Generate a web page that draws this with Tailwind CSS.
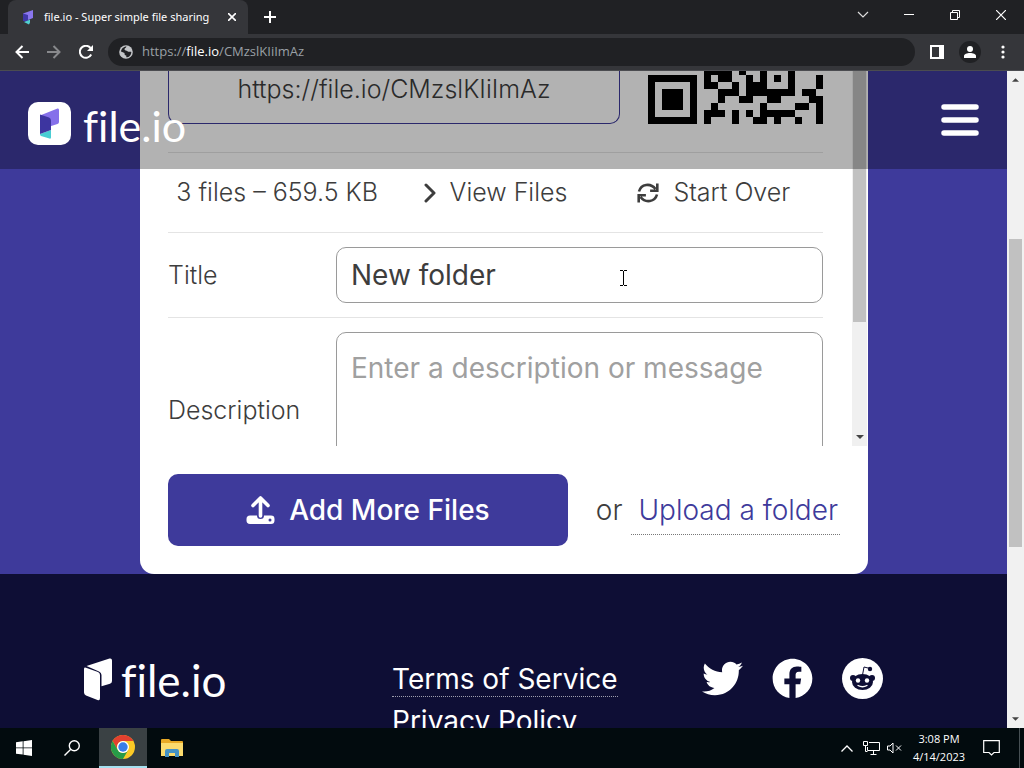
<!DOCTYPE html>
<html lang="en">
<head>
<meta charset="utf-8">
<meta name="viewport" content="width=device-width, initial-scale=1">
<title>file.io - Super simple file sharing</title>
<script src="https://cdn.jsdelivr.net/npm/@tailwindcss/browser@4"></script>
</head>
<body class="flex h-screen flex-col overflow-hidden bg-[#202124] font-['Inter',sans-serif] text-[#3d3d3d]">

<!-- Tab strip -->
<header class="flex h-[34px] shrink-0 items-stretch bg-[#202124] pl-2 font-['Open_Sans',sans-serif] text-white">
  <div class="flex w-60 items-center rounded-t-lg bg-[#35363a] pl-3 pr-2">
    <svg class="size-4" viewBox="0 0 16 16"><path d="M3 4.500 13 1v8l-5 2z" fill="#8a76ee"/><path d="M3 4.500l5 1.500v7l-5-1z" fill="#4038a8"/><path d="M4 13l4-1.500 2-1v3l-1 2z" fill="#52d1d2"/></svg>
    <span class="ml-2 flex-1 whitespace-nowrap font-['Noto_Sans',sans-serif] text-[11px]">file.io - Super simple file sharing</span>
    <button aria-label="Close tab" class="grid size-4 place-items-center"><svg class="size-2" viewBox="0 0 8 8" stroke="#fff" stroke-width="1.600"><path d="M0 0l8 8M8 0L0 8"/></svg></button>
  </div>
  <button aria-label="New tab" class="grid w-11 place-items-center"><svg class="size-3" viewBox="0 0 12 12" stroke="#fff" stroke-width="2"><path d="M6 0v12M0 6h12"/></svg></button>
  <div class="ml-auto flex pb-1">
    <button aria-label="Search tabs" class="grid w-[46px] place-items-center"><svg class="h-2 w-3" viewBox="0 0 12 8" fill="none" stroke="#ddd" stroke-width="1.200"><path d="M1 1l5 5 5-5"/></svg></button>
    <button aria-label="Minimize" class="grid w-[46px] place-items-center"><svg class="size-[10px]" viewBox="0 0 10 10" fill="#fff"><path d="M0 4h10v1H0z"/></svg></button>
    <button aria-label="Restore" class="grid w-[46px] place-items-center"><svg class="size-[10px]" viewBox="0 0 10 10" fill="none" stroke="#fff"><path d="M.5 2.500h7v7h-7zM2.500 2.500v-2h7v7h-2"/></svg></button>
    <button aria-label="Close" class="grid w-[46px] place-items-center"><svg class="size-[10px]" viewBox="0 0 10 10" stroke="#fff" stroke-width="1.200"><path d="M0 0l10 10M10 0L0 10"/></svg></button>
  </div>
</header>

<!-- Toolbar -->
<nav class="flex h-[37px] shrink-0 items-center border-b border-[#4b4c50] bg-[#35363a] pl-3 pr-[11px] font-['Open_Sans',sans-serif] text-white">
  <button aria-label="Back" class="grid size-5 place-items-center"><svg class="size-[14px]" viewBox="0 0 14 14" fill="none" stroke="#fff" stroke-width="2"><path d="M14 7H1.500M7.500 1l-6 6 6 6"/></svg></button>
  <button aria-label="Forward" class="ml-3 grid size-5 place-items-center"><svg class="size-[14px]" viewBox="0 0 14 14" fill="none" stroke="#88898c" stroke-width="2"><path d="M0 7h12.500M6.500 1l6 6-6 6"/></svg></button>
  <button aria-label="Reload" class="ml-3 grid size-5 place-items-center"><svg class="size-[14px]" viewBox="0 0 14 14"><path d="M12.200 9.500A6 6 0 1 1 11.500 3" fill="none" stroke="#fff" stroke-width="2"/><path d="M14 0v6H8z" fill="#fff"/></svg></button>
  <div class="ml-3 flex h-7 flex-1 items-center rounded-full bg-[#202124] px-[11px]">
    <svg class="size-[14px]" viewBox="0 0 14 14"><circle cx="7" cy="7" r="6.800" fill="#c3c5c8"/><path d="M7.500 1.500C7 3 5.500 3 5.500 4.500c0 1 2 .8 3 1.800s2.500.2 3.800.7c0 3-2 5.300-5 5.300V10.500C5.500 10.500 5.500 9 5.500 8L2 6.500C2.300 4 4.500 1.500 7.500 1.500z" fill="#202124"/></svg>
    <div role="textbox" aria-label="Address" class="ml-2 pl-px text-[13px] text-[#9aa0a6]">https://<span class="text-white">file.io</span>/CMzslKIiImAz</div>
  </div>
  <button aria-label="Side panel" class="ml-3 grid size-5 place-items-center"><svg class="size-[14px]" viewBox="0 0 14 14"><path d="M0 0h14v14H0zM2 2v10h7V2z" fill="#fff" fill-rule="evenodd"/></svg></button>
  <button aria-label="Profile" class="ml-3 grid size-[22px] place-items-center rounded-full bg-[#202124]"><svg class="size-3" viewBox="0 0 12 12" fill="#fff"><circle cx="6" cy="3" r="3"/><path d="M0 12V10c0-4 12-4 12 0v2z"/></svg></button>
  <button aria-label="Menu" class="ml-3 grid size-5 place-items-center"><svg class="h-[14px] w-1" viewBox="0 0 4 14" fill="#fff"><circle cx="2" cy="2" r="1.600"/><circle cx="2" cy="7" r="1.600"/><circle cx="2" cy="12" r="1.600"/></svg></button>
</nav>

<!-- Page viewport -->
<div class="relative flex min-h-0 flex-1">
  <div class="relative min-w-0 flex-1 overflow-hidden bg-[#0e0e35]">

    <!-- Site header laid over the scrolled page -->
    <div class="absolute inset-x-0 top-0 z-10 flex h-[98px] items-center justify-between bg-black/30 pr-7 pb-px pl-7 text-white">
      <a href="#" class="flex items-center pt-2">
        <svg class="size-[43px]" viewBox="0 0 43 43"><rect width="43" height="43" rx="10" fill="#fff"/><path d="M12 13.500 29.500 6.500Q31 6 31 8V20q0 1.500-1.500 2L20 25z" fill="#8570ea"/><path d="M12 32l11-4v7.500q0 1.500-1.500 1L13 34q-1-.5-1-2z" fill="#48cdd3"/><path d="M12 12.500l9 3q2 .8 2 3V28l-11 4z" fill="#3d35a0"/></svg>
        <span class="ml-3 pt-1 font-['Lato',sans-serif] text-[43px] leading-none [font-variant-ligatures:none]">file.io</span>
      </a>
      <button aria-label="Open menu"><svg class="h-8 w-[38px]" viewBox="0 0 38 32" stroke="#fff" stroke-width="5.500" stroke-linecap="round"><path d="M3 3h32M3 16h32M3 29h32"/></svg></button>
    </div>

    <main class="bg-[#3e3a9b] pr-[139px] pl-[140px]">
      <section class="rounded-b-[14px] bg-white">
        <div class="flex h-[375px] overflow-hidden pr-px">
          <div class="flex-1 pl-7 pr-[29px]">
            <div class="flex items-start gap-7 border-b border-[#e4e4e4] pb-7">
              <input aria-label="Share link" readonly value="https://file.io/CMzslKIiImAz" class="h-[53px] min-w-0 flex-1 rounded-b-[10px] border border-t-0 border-[#3e3a9b] pb-4 text-center text-[25px] font-light">
              <svg class="h-[53px] w-[175px]" viewBox="0 0 25 7.571" shape-rendering="crispEdges" role="img" aria-label="QR code"><g transform="translate(0 -.429)">
                <path d="M0 1h7v7H0zM1 2v5h5V2zM2 3h3v3H2z" fill-rule="evenodd"/>
                <path d="M8 0h4v1h-4zM13 0h1v1h-1zM16 0h1v4h-1zM20 0h1v4h-1zM8 1h1v2h-1zM10 1h2v1h-2zM14 1h1v1h-1zM18 1h1v1h-1zM24 1h1v2h-1zM9 2h1v1h-1zM12 2h1v1h-1zM14 2h2v1h-2zM10 3h3v1h-3zM14 3h7v1h-7zM22 3h2v1h-2zM10 4h1v1h-1zM13 4h2v1h-2zM17 4h2v1h-2zM23 4h2v1h-2zM9 5h1v1h-1zM16 5h1v3h-1zM21 5h2v1h-2zM24 5h1v3h-1zM8 6h3v1H8zM8 7h1v1H8zM12 6h1v2h-1zM14 6h1v1h-1zM17 6h4v1h-4zM15 7h1v1h-1zM18 7h1v1h-1zM21 7h1v1h-1z"/></g></svg>
            </div>
            <div class="grid h-20 grid-cols-3 items-center border-b border-[#e4e4e4] text-[25px] font-light whitespace-nowrap">
              <span class="text-center">3 files – 659.5 KB</span>
              <button class="flex items-center justify-center gap-[14px]"><svg class="h-5 w-3" viewBox="0 0 12 20" fill="none" stroke="#3d3d3d" stroke-width="3" stroke-linecap="round" stroke-linejoin="round"><path d="M2 2l8 8-8 8"/></svg>View Files</button>
              <button class="flex items-center justify-center gap-[14px]"><svg class="size-[22px]" viewBox="0 0 22 22" fill="none" stroke="#3d3d3d" stroke-width="2.600"><path d="M2 9.500C4 2 13.500.5 18.500 7M20.300 1.500v7.200h-7.200M20 12.500C18 20 8.500 21.500 3.500 15M1.700 20.500v-7.200h7.200"/></svg>Start Over</button>
            </div>
            <div class="flex items-center border-b border-[#e4e4e4] py-[14px]">
              <label for="title" class="w-[168px] pt-px text-[25px] font-light">Title</label>
              <input id="title" value="New folder" class="h-14 min-w-0 flex-1 rounded-[10px] border border-[#9a9a9a] px-[14px] text-[28px] font-normal">
            </div>
            <div class="flex items-center py-[14px]">
              <label for="description" class="w-[168px] pt-px text-[25px] font-light">Description</label>
              <textarea id="description" placeholder="Enter a description or message" class="h-[156px] min-w-0 flex-1 resize-none rounded-[10px] border border-[#9a9a9a] px-[14px] py-[15px] text-[28px] leading-10 font-normal placeholder:text-[#a0a0a0]"></textarea>
            </div>
          </div>
          <div class="flex w-[15px] flex-col items-center justify-between bg-[#f0f0f0] pb-[7px]">
            <div class="h-[251px] w-[13px] bg-[#c1c1c1]"></div>
            <svg class="h-1 w-2" viewBox="0 0 8 4" fill="#444"><path d="M0 0h8L4 4z"/></svg>
          </div>
        </div>
        <div class="flex items-center p-7 text-[28px] whitespace-nowrap">
          <button class="flex h-[72px] flex-1 items-center justify-center gap-[14px] rounded-[10px] bg-[#3e3a9b] font-medium text-white">
            <svg class="size-[29px]" viewBox="0 0 29 29"><path d="M4 19.500H11a3.500 3.500 0 0 0 7 0H25a3.500 3.500 0 0 1 3.500 3.500v1.500a3.500 3.500 0 0 1-3.500 3.500H4A3.500 3.500 0 0 1 .5 24.500V23A3.500 3.500 0 0 1 4 19.500z" fill="#fff"/><path d="M14.500 20V2.500M7 9.500l7.500-7.500L22 9.500" fill="none" stroke="#fff" stroke-width="3.600" stroke-linecap="round" stroke-linejoin="round"/><circle cx="24" cy="24" r="1.500" fill="#3e3a9b"/></svg>
            Add More Files</button>
          <span class="ml-7 font-light">or</span>
          <a href="#" class="ml-2 border-b border-dotted border-[#777] pt-[3px] pr-0.5 pb-[3px] pl-2 font-light text-[#3e3a9b]">Upload a folder</a>
        </div>
      </section>
    </main>

    <footer class="flex items-start pt-[84px] pl-[84px] text-white">
      <a href="#" class="flex w-[308px] items-center">
        <svg class="h-[43px] w-7" viewBox="0 0 28 43" fill="#fff"><path d="M2.500 8 25.500.5Q28 0 28 2.500V23q0 2-2 2.700l-8.500 2.600V17q0-2.500-2.500-3.500z"/><path d="M0 11q0-2 2-1.300l12 4.300q2 .8 2 3V40q0 3-2.500 2L2 37.500q-2-.8-2-3z"/></svg>
        <span class="ml-[9px] font-['Lato',sans-serif] text-[44px] leading-[42px] [font-variant-ligatures:none]">file.io</span>
      </a>
      <ul class="w-[310px] text-[28px] leading-[42px] font-normal whitespace-nowrap">
        <li><a href="#" class="border-b border-dotted border-white/60">Terms of Service</a></li>
        <li><a href="#">Privacy Policy</a></li>
      </ul>
      <div class="flex items-center gap-[29px]">
        <a href="#" aria-label="Twitter"><svg class="size-[41px]" viewBox="0 0 512 512" fill="#fff"><path d="M459.370 151.716c.325 4.548.325 9.097.325 13.645 0 138.720-105.583 298.558-298.558 298.558-59.452 0-114.680-17.219-161.137-47.106 8.447.974 16.568 1.299 25.340 1.299 49.055 0 94.213-16.568 130.274-44.832-46.132-.975-84.792-31.188-98.112-72.772 6.498.974 12.995 1.624 19.818 1.624 9.421 0 18.843-1.300 27.614-3.573-48.081-9.747-84.143-51.980-84.143-102.985v-1.299c13.969 7.797 30.214 12.670 47.431 13.319-28.264-18.843-46.781-51.005-46.781-87.391 0-19.492 5.197-37.360 14.294-52.954 51.655 63.675 129.300 105.258 216.365 109.807-1.624-7.797-2.599-15.918-2.599-24.040 0-57.828 46.782-104.934 104.934-104.934 30.213 0 57.502 12.670 76.670 33.137 23.715-4.548 46.456-13.320 66.599-25.340-7.798 24.366-24.366 44.833-46.132 57.827 21.117-2.273 41.584-8.122 60.426-16.243-14.292 20.791-32.161 39.308-52.628 54.253z"/></svg></a>
        <a href="#" aria-label="Facebook"><svg class="size-[41px]" viewBox="0 0 512 512" fill="#fff"><path d="M504 256C504 119 393 8 256 8S8 119 8 256c0 123.780 90.690 226.380 209.250 245V327.690h-63V256h63v-54.640c0-62.150 37-96.480 93.670-96.480 27.140 0 55.520 4.840 55.520 4.840v61h-31.280c-30.800 0-40.410 19.120-40.410 38.730V256h68.780l-11 71.690h-57.780V501C413.310 482.380 504 379.780 504 256z"/></svg></a>
        <a href="#" aria-label="Reddit"><svg class="size-[41px]" viewBox="0 0 41 41"><circle cx="20.500" cy="20.500" r="20.500" fill="#fff"/><g fill="#0e0e35"><ellipse cx="20.500" cy="24" rx="10.500" ry="8"/><circle cx="11" cy="20" r="3"/><circle cx="30" cy="20" r="3"/><circle cx="28" cy="11" r="2.200"/></g><path d="M20.500 17l1.500-8 6 1.500" fill="none" stroke="#0e0e35"/><circle cx="16" cy="22.500" r="2.200" fill="#fff"/><circle cx="25" cy="22.500" r="2.200" fill="#fff"/><path d="M16 27.500q4.500 2.500 9 0" fill="none" stroke="#fff" stroke-width="1.300" stroke-linecap="round"/></svg></a>
      </div>
    </footer>
  </div>

  <!-- Page scrollbar -->
  <div class="flex w-[17px] shrink-0 flex-col items-center bg-[#f1f1f1] py-[7px]">
    <svg class="h-1 w-[7px]" viewBox="0 0 8 4" fill="#444"><path d="M0 4h8L4 0z"/></svg>
    <div class="mt-[157px] h-[308px] w-[13px] bg-[#c1c1c1]"></div>
    <svg class="mt-auto h-1 w-[7px]" viewBox="0 0 8 4" fill="#444"><path d="M0 0h8L4 4z"/></svg>
  </div>

  <!-- Text cursor -->
  <svg class="absolute top-[199px] left-[619px] z-20 h-4 w-[9px]" viewBox="0 0 9 16" fill="none" stroke="#000"><path d="M1 .5h3M5 .5h3M4.500 1v14M1 15.500h3M5 15.500h3"/></svg>
</div>

<!-- Taskbar -->
<footer class="flex h-10 shrink-0 items-stretch bg-[#020b0e] font-['Open_Sans',sans-serif] text-white">
  <button aria-label="Start" class="grid w-12 place-items-center"><svg class="size-4" viewBox="0 0 16 16" fill="#fff"><path d="M0 2.300l6.700-1v6.200H0zM7.500 1.200L16 0v7.500H7.500zM0 8.300h6.700v6.300L0 13.700zM7.500 8.300H16V16l-8.500-1.200z"/></svg></button>
  <button aria-label="Search" class="grid w-12 place-items-center"><svg class="size-4" viewBox="0 0 16 16" fill="none" stroke="#fff" stroke-width="1.400"><circle cx="10.300" cy="5.700" r="5"/><path d="M6.800 9.300L.5 15.500"/></svg></button>
  <button aria-label="Chrome" class="ml-[3px] grid w-12 place-items-center border-b-2 border-[#a5e0f0] bg-[#3a4144]"><svg class="size-6" viewBox="0 0 24 24"><circle cx="12" cy="12" r="12" fill="#fbc926"/><path d="M1.600 6A12 12 0 0 1 22.400 6H12a6 6 0 0 0-5.200 9z" fill="#e2402f"/><path d="M1.600 6A12 12 0 0 0 12 24l5.200-9A6 6 0 0 1 6.800 15z" fill="#279b48"/><circle cx="12" cy="12" r="6" fill="#fff"/><circle cx="12" cy="12" r="4.700" fill="#3a7de8"/></svg></button>
  <button aria-label="File Explorer" class="grid w-[50px] place-items-center"><svg class="h-[18px] w-[22px]" viewBox="0 0 22 18"><path d="M0 1q0-1 1-1h7l2 2h11q1 0 1 1v14H0z" fill="#e8a925"/><path d="M0 4h22v13H0z" fill="#fbdb6e"/><path d="M4 18v-6q0-2 2-2h10q2 0 2 2v6h-4v-4H8v4z" fill="#4592c5"/></svg></button>
  <div class="ml-auto flex items-center">
    <svg class="h-[7px] w-3" viewBox="0 0 12 7" fill="none" stroke="#fff" stroke-width="1.300"><path d="M.5 6.500L6 1l5.500 5.500"/></svg>
    <svg class="ml-[10px] h-[14px] w-[17px]" viewBox="0 0 17 14" fill="none" stroke="#fff"><path d="M6 1.500h10.500v8H4.500V6M7.500 13.500h6M10.500 10v3.500M.5.500h4v4h-4zM2.500 4.500v6h2"/></svg>
    <svg class="ml-[7px] h-3 w-[15px]" viewBox="0 0 15 12" fill="none" stroke="#fff"><path d="M.5 4v4H3l3 3V1L3 4zM9 3.500l5 5M14 3.500l-5 5"/></svg>
    <div class="ml-[9px] w-[56px] text-center text-[11px] leading-[18px] whitespace-nowrap"><div>3:08 PM</div><div>4/14/2023</div></div>
    <button aria-label="Notifications" class="ml-4"><svg class="h-4 w-[17px]" viewBox="0 0 17 16" fill="none" stroke="#fff" stroke-width="1.200"><path d="M.7.700h15.600v11.800H11L8.500 15 6 12.500H.7z"/></svg></button>
    <div class="mr-1 ml-[19px] h-10 w-px bg-[#475054]"></div>
  </div>
</footer>
</body>
</html>
